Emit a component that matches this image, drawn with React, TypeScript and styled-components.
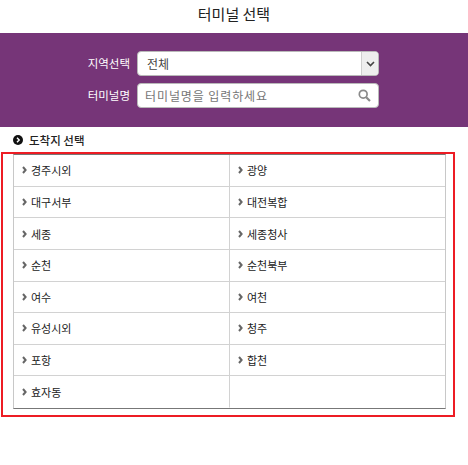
import React from 'react';
import styled, { createGlobalStyle } from 'styled-components';

const font = `"Noto Sans CJK KR", "Liberation Sans", sans-serif`;

const GlobalStyle = createGlobalStyle`
  html, body {
    margin: 0;
    padding: 0;
    background: #ffffff;
    font-family: ${font};
  }
`;

const Page = styled.div`
  width: 468px;
  height: 465px;
  overflow: hidden;
`;

const Title = styled.h1`
  margin: 0;
  height: 33px;
  line-height: 28px;
  text-align: center;
  font-size: 15px;
  font-weight: 400;
  color: #222;
`;

const SearchPanel = styled.div`
  height: 94px;
  box-sizing: border-box;
  padding-top: 18px;
  background: #763578;
  display: flex;
  flex-direction: column;
  gap: 7px;
`;

const FormRow = styled.div`
  display: flex;
  align-items: center;
  gap: 7px;
  height: 25px;
`;

const Label = styled.label`
  width: 130px;
  padding-bottom: 2px;
  text-align: right;
  font-size: 11.5px;
  color: #fff;
`;

const Field = styled.div`
  width: 242px;
  height: 100%;
  box-sizing: border-box;
  display: flex;
  align-items: center;
  justify-content: space-between;
  background: #fff;
  border: 1px solid #b9b9b9;
  border-radius: 4px;
  overflow: hidden;
  font-size: 12px;
`;

const SelectText = styled.span`
  padding: 0 0 1px 9px;
  color: #444;
`;

const Arrow = styled.span`
  width: 16px;
  height: 100%;
  display: flex;
  align-items: center;
  justify-content: center;
  background: #eeeeee;
  border-left: 1px solid #cfcfcf;
`;

const Placeholder = styled.span`
  padding-left: 7px;
  color: #757575;
  letter-spacing: 0.9px;
`;

const SearchIcon = styled.svg`
  margin-right: 7px;
`;

const SectionHead = styled.h2`
  margin: 0;
  height: 25px;
  box-sizing: border-box;
  padding-left: 13px;
  display: flex;
  align-items: center;
  gap: 6px;
  font-size: 11.5px;
  font-weight: 500;
  color: #222;
`;

const Highlight = styled.div`
  width: 454px;
  height: 265px;
  box-sizing: border-box;
  margin-left: 1px;
  padding: 0 8px 0 10px;
  border: 2px solid #ed1c24;
`;

const Table = styled.div`
  width: 433px;
  height: 255px;
  box-sizing: border-box;
  display: grid;
  grid-template-columns: 215px 1fr;
  grid-auto-rows: 1fr;
  border: 1px solid #c8c8c8;
  border-top: 1px solid #777;
  border-bottom: 1px solid #777;
`;

const Cell = styled.div<{ $right: boolean; $last: boolean }>`
  box-sizing: border-box;
  display: flex;
  align-items: center;
  gap: 4px;
  padding-left: 8px;
  font-size: 11px;
  color: #222;
  border-left: ${(p) => (p.$right ? '1px solid #d2d2d2' : 'none')};
  border-bottom: 1px solid ${(p) => (p.$last ? 'transparent' : '#d2d2d2')};
`;

const terminals = [
  '경주시외', '광양',
  '대구서부', '대전복합',
  '세종', '세종청사',
  '순천', '순천북부',
  '여수', '여천',
  '유성시외', '청주',
  '포항', '합천',
  '효자동', '',
];

function Chevron() {
  return (
    <svg width="5" height="8" viewBox="0 0 5 8">
      <path d="M1 1l2.6 3L1 7" fill="none" stroke="#666" strokeWidth="2" />
    </svg>
  );
}

export default function App() {
  return (
    <Page>
      <GlobalStyle />
      <Title>터미널 선택</Title>
      <SearchPanel>
        <FormRow>
          <Label>지역선택</Label>
          <Field>
            <SelectText>전체</SelectText>
            <Arrow>
              <svg width="9" height="6" viewBox="0 0 9 6">
                <path d="M1 1l3.5 3.5L8 1" fill="none" stroke="#444" strokeWidth="1.6" />
              </svg>
            </Arrow>
          </Field>
        </FormRow>
        <FormRow>
          <Label>터미널명</Label>
          <Field>
            <Placeholder>터미널명을 입력하세요</Placeholder>
            <SearchIcon width="13" height="13" viewBox="0 0 13 13">
              <circle cx="5.2" cy="5.2" r="3.9" fill="none" stroke="#8a8a8a" strokeWidth="1.7" />
              <path d="M8.2 8.2l3.8 3.8" stroke="#8a8a8a" strokeWidth="2.2" />
            </SearchIcon>
          </Field>
        </FormRow>
      </SearchPanel>
      <SectionHead>
        <svg width="10" height="10" viewBox="0 0 10 10">
          <circle cx="5" cy="5" r="5" fill="#111" />
          <path d="M4 2.8L6.2 5 4 7.2" fill="none" stroke="#fff" strokeWidth="1.4" />
        </svg>
        도착지 선택
      </SectionHead>
      <Highlight>
        <Table>
          {terminals.map((name, i) => (
            <Cell key={i} $right={i % 2 === 1} $last={i >= terminals.length - 2}>
              {name && <Chevron />}
              {name}
            </Cell>
          ))}
        </Table>
      </Highlight>
    </Page>
  );
}
